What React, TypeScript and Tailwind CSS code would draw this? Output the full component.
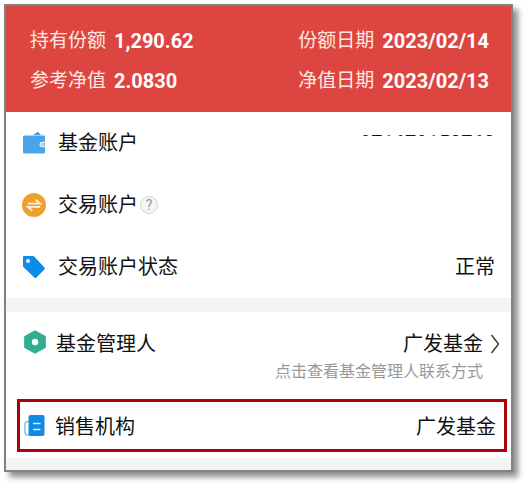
import type { ReactNode } from "react";

type RowProps = {
  icon: ReactNode;
  label: ReactNode;
  children?: ReactNode;
};

const WalletIcon = () => (
  <svg className="h-6 w-6 shrink-0" viewBox="0 0 24 24" aria-hidden="true">
    <path d="M11 4 16 .8 19 4z" fill="#4796d2" />
    <path d="M2.500 4.500h19.500a1 1 0 0 1 1 1V21a1.500 1.500 0 0 1-1.500 1.500H2.500A1.500 1.500 0 0 1 1 21V6a1.500 1.500 0 0 1 1.500-1.500z" fill="#46a5ed" />
    <path d="M23.500 10.800h-3.300a2.700 2.700 0 0 0 0 5.400h3.300z" fill="#e4f3fd" />
    <path d="M23 12h-2.600a1.500 1.500 0 0 0 0 3H23z" fill="#7fc1f3" />
    <circle cx="20.600" cy="13.500" r=".8" fill="#fff" />
  </svg>
);

const ExchangeIcon = () => (
  <svg className="h-6 w-6 shrink-0" viewBox="0 0 24 24" aria-hidden="true">
    <circle cx="12" cy="12" r="12" fill="#eda02f" />
    <path d="M5.800 10.700h12.400L13.600 6.800M18.200 13.900H5.800l4.600 3.700" fill="none" stroke="#fff0d6" strokeWidth="1.800" />
  </svg>
);

const TagIcon = () => (
  <svg className="h-6 w-6 shrink-0" viewBox="0 0 24 24" aria-hidden="true">
    <path
      fillRule="evenodd"
      d="M2.200 1h8.600a2 2 0 0 1 1.400.6l10.200 10.800a1.500 1.500 0 0 1 0 2.100l-8 8a1.500 1.500 0 0 1-2.100 0L1.600 12.300A2 2 0 0 1 1 10.900V2.200A1.200 1.200 0 0 1 2.200 1zM6 4a2 2 0 1 0 0 4 2 2 0 0 0 0-4z"
      fill="#0c8ce9"
    />
  </svg>
);

const HexagonIcon = () => (
  <svg className="h-6 w-6 shrink-0" viewBox="0 0 24 24" aria-hidden="true">
    <path d="M13 .8 23.300 6.400v11.200L13 23.200 2.700 17.600V6.400z" fill="#30ad93" stroke="#30ad93" strokeLinejoin="round" />
    <circle cx="13" cy="12" r="3.200" fill="#fff" />
  </svg>
);

const BuildingIcon = () => (
  <svg className="h-6 w-6 shrink-0" viewBox="0 0 24 24" aria-hidden="true">
    <path d="M7 7.500H4.500a2.500 2.500 0 0 0-2.500 2.500v8.500A2.500 2.500 0 0 0 4.500 21H7" fill="none" stroke="#5fb0ea" strokeWidth="1.200" />
    <rect x="5.500" y="1" width="16" height="21" rx="2" fill="#118ae3" />
    <path d="M10 9.500h7.500M10 15.500h7.500" stroke="#d8edfc" strokeWidth="1.400" />
  </svg>
);

const Holding = ({ label, value }: { label: string; value: string }) => (
  <div className="flex items-center gap-2">
    <dt className="text-[19px] text-[#ffe9e2]">{label}</dt>
    <dd className="text-xl font-bold">{value}</dd>
  </div>
);

const Row = ({ icon, label, children }: RowProps) => (
  <div className="flex h-[62px] items-center justify-between px-4">
    <div className="flex items-center gap-3">
      {icon}
      <div className="flex items-center gap-0.5">{label}</div>
    </div>
    {children}
  </div>
);

export default function App() {
  return (
    <main className="bg-white pt-1 pr-[14px] pb-3 pl-1 font-[Roboto,'Noto_Sans_CJK_SC',sans-serif] text-xl text-[#111]">
      <div className="border-2 border-[#808285] bg-white shadow-[5px_5px_6px_rgba(0,0,0,0.45)]">
        <dl className="flex h-[106px] justify-between bg-[#dd4640] pt-[15px] pr-[22px] pl-6 text-white">
          <div className="flex flex-col leading-10">
            <Holding label="持有份额" value="1,290.62" />
            <Holding label="参考净值" value="2.0830" />
          </div>
          <div className="flex flex-col leading-10">
            <Holding label="份额日期" value="2023/02/14" />
            <Holding label="净值日期" value="2023/02/13" />
          </div>
        </dl>

        <Row icon={<WalletIcon />} label="基金账户">
          {/* account number, masked down to the tops of the digits */}
          <span className="mb-4 h-[2px] overflow-hidden leading-[18px]">971679150760</span>
        </Row>
        <Row
          icon={<ExchangeIcon />}
          label={
            <>
              交易账户
              <button className="flex h-[18px] w-[18px] items-center justify-center rounded-full border border-[#d4d4d4] bg-[#f4f4f4] text-sm text-[#999]">
                ?
              </button>
            </>
          }
        />
        <Row icon={<TagIcon />} label="交易账户状态">
          <span>正常</span>
        </Row>

        <div className="h-[14px] bg-[#f4f4f4]" />

        <div className="flex h-[87px] items-start justify-between pt-[18px] pr-3 pl-4">
          <div className="flex items-start gap-[10px]">
            <HexagonIcon />
            <span>基金管理人</span>
          </div>
          <div className="flex flex-col gap-[2px]">
            <button className="flex items-center justify-end gap-2">
              广发基金
              <svg className="h-5 w-2" viewBox="0 0 8 20" fill="none" stroke="#333" strokeWidth="1.400" aria-hidden="true">
                <path d="M.5 1 7.500 10l-7 9" />
              </svg>
            </button>
            <span className="pr-4 text-base text-[#999]">点击查看基金管理人联系方式</span>
          </div>
        </div>

        <div className="mr-1 ml-[11px] flex h-[53px] items-center justify-between border-3 border-[#a90509] pr-2 pl-[3px]">
          <div className="flex items-center gap-2">
            <BuildingIcon />
            <span className="pt-[3px]">销售机构</span>
          </div>
          <span className="pt-[3px]">广发基金</span>
        </div>

        <div className="mt-[6px] h-3 bg-[#f3f4f4]" />
      </div>
    </main>
  );
}
